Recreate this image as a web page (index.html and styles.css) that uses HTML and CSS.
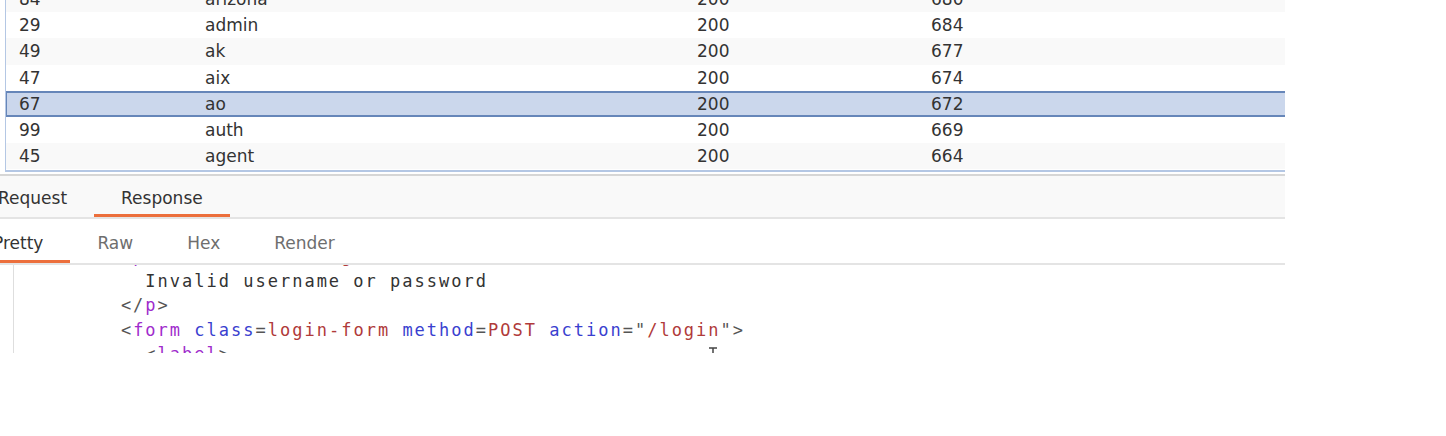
FILE: index.html
```html
<!DOCTYPE html>
<html>
<head>
<meta charset="utf-8">
<link rel="stylesheet" href="styles.css">
</head>
<body>
<div class="app">
  <div class="results">
    <div class="grid">
      <div class="rows">
        <div class="row alt"><span>84</span><span>arizona</span><span>200</span><span>680</span></div>
        <div class="row"><span>29</span><span>admin</span><span>200</span><span>684</span></div>
        <div class="row alt"><span>49</span><span>ak</span><span>200</span><span>677</span></div>
        <div class="row"><span>47</span><span>aix</span><span>200</span><span>674</span></div>
        <div class="row sel"><span>67</span><span>ao</span><span>200</span><span>672</span></div>
        <div class="row"><span>99</span><span>auth</span><span>200</span><span>669</span></div>
        <div class="row alt"><span>45</span><span>agent</span><span>200</span><span>664</span></div>
      </div>
    </div>
  </div>
  <div class="tabs">
    <div class="tab">Request</div>
    <div class="tab active">Response</div>
  </div>
  <div class="subtabs">
    <div class="subtab active">Pretty</div>
    <div class="subtab">Raw</div>
    <div class="subtab">Hex</div>
    <div class="subtab">Render</div>
  </div>
  <div class="editor">
<pre class="code"><span class="p">        &lt;</span><span class="t">p</span> <span class="a">class</span><span class="p">=</span><span class="v">is-warning</span><span class="p">&gt;</span>
<span class="x">          Invalid username or password</span>
<span class="p">        &lt;/</span><span class="t">p</span><span class="p">&gt;</span>
<span class="p">        &lt;</span><span class="t">form</span> <span class="a">class</span><span class="p">=</span><span class="v">login-form</span> <span class="a">method</span><span class="p">=</span><span class="v">POST</span> <span class="a">action</span><span class="p">="</span><span class="v">/login</span><span class="p">"&gt;</span>
<span class="p">          &lt;</span><span class="t">label</span><span class="p">&gt;</span></pre>
    <svg class="cursor" width="12" height="14" viewBox="0 0 12 14"><path d="M2 1h8M6 1v12M2 13h8" stroke="#444" stroke-width="1.5" fill="none"/></svg>
  </div>
</div>
</body>
</html>
```
FILE: styles.css
```css
html, body {
  margin: 0;
  padding: 0;
  background: #ffffff;
}

.app {
  position: relative;
  width: 1285px;
  height: 353px;
  overflow: hidden;
  display: flex;
  flex-direction: column;
  font-family: "DejaVu Sans", "Liberation Sans", sans-serif;
  color: #333333;
}

.results {
  height: 174px;
  flex: none;
  padding-left: 5px;
  box-sizing: border-box;
}

.grid {
  height: 172px;
  box-sizing: border-box;
  border-left: 1px solid #b4c7e4;
  border-bottom: 2px solid #b4c7e4;
  overflow: hidden;
}

.rows {
  margin-top: -14px;
}

.row {
  display: grid;
  grid-template-columns: 186px 492px 234px 1fr;
  height: 26.2px;
  line-height: 26px;
  padding-left: 13px;
  box-sizing: border-box;
  font-size: 17px;
  background: #ffffff;
}

.row.alt {
  background: #f9f9f9;
}

.row.sel {
  background: #cbd7ec;
  border: 2px solid #6686b9;
  border-right: none;
  margin-left: -1px;
  padding-left: 12px;
  line-height: 22px;
}

.tabs {
  flex: none;
  height: 45px;
  box-sizing: border-box;
  border-top: 2px solid #d6d6d6;
  border-bottom: 2px solid #e4e4e4;
  background: #f9f9f9;
  display: flex;
  margin-left: -29px;
}

.tab {
  padding: 10px 27px 0;
  font-size: 17px;
  line-height: 24px;
  height: 41px;
  box-sizing: border-box;
  border-bottom: 3px solid transparent;
  color: #333333;
}

.tab.active {
  border-bottom-color: #ec6f3c;
}

.subtabs {
  flex: none;
  height: 46px;
  box-sizing: border-box;
  border-bottom: 2px solid #e4e4e4;
  display: flex;
  margin-left: -34px;
}

.subtab {
  padding: 12px 27px 0;
  font-size: 17px;
  line-height: 24px;
  height: 44px;
  box-sizing: border-box;
  border-bottom: 3px solid transparent;
  color: #6e6e6e;
}

.subtab.active {
  color: #333333;
  border-bottom-color: #ec6f3c;
}

.editor {
  position: relative;
  flex: 1;
  margin-left: 13px;
  border-left: 1.5px solid #dedede;
  overflow: hidden;
}

.code {
  margin: -21px 0 0 0;
  padding-left: 9px;
  font-family: "DejaVu Sans Mono", "Liberation Mono", monospace;
  font-size: 17px;
  letter-spacing: 2px;
  line-height: 24.5px;
  color: #333333;
  white-space: pre;
}

.code .p { color: #555555; }
.code .t { color: #a02ccc; }
.code .a { color: #3a3fcf; }
.code .v { color: #b03a3a; }
.code .x { color: #333333; }

.cursor {
  position: absolute;
  left: 693px;
  top: 82px;
}
```
